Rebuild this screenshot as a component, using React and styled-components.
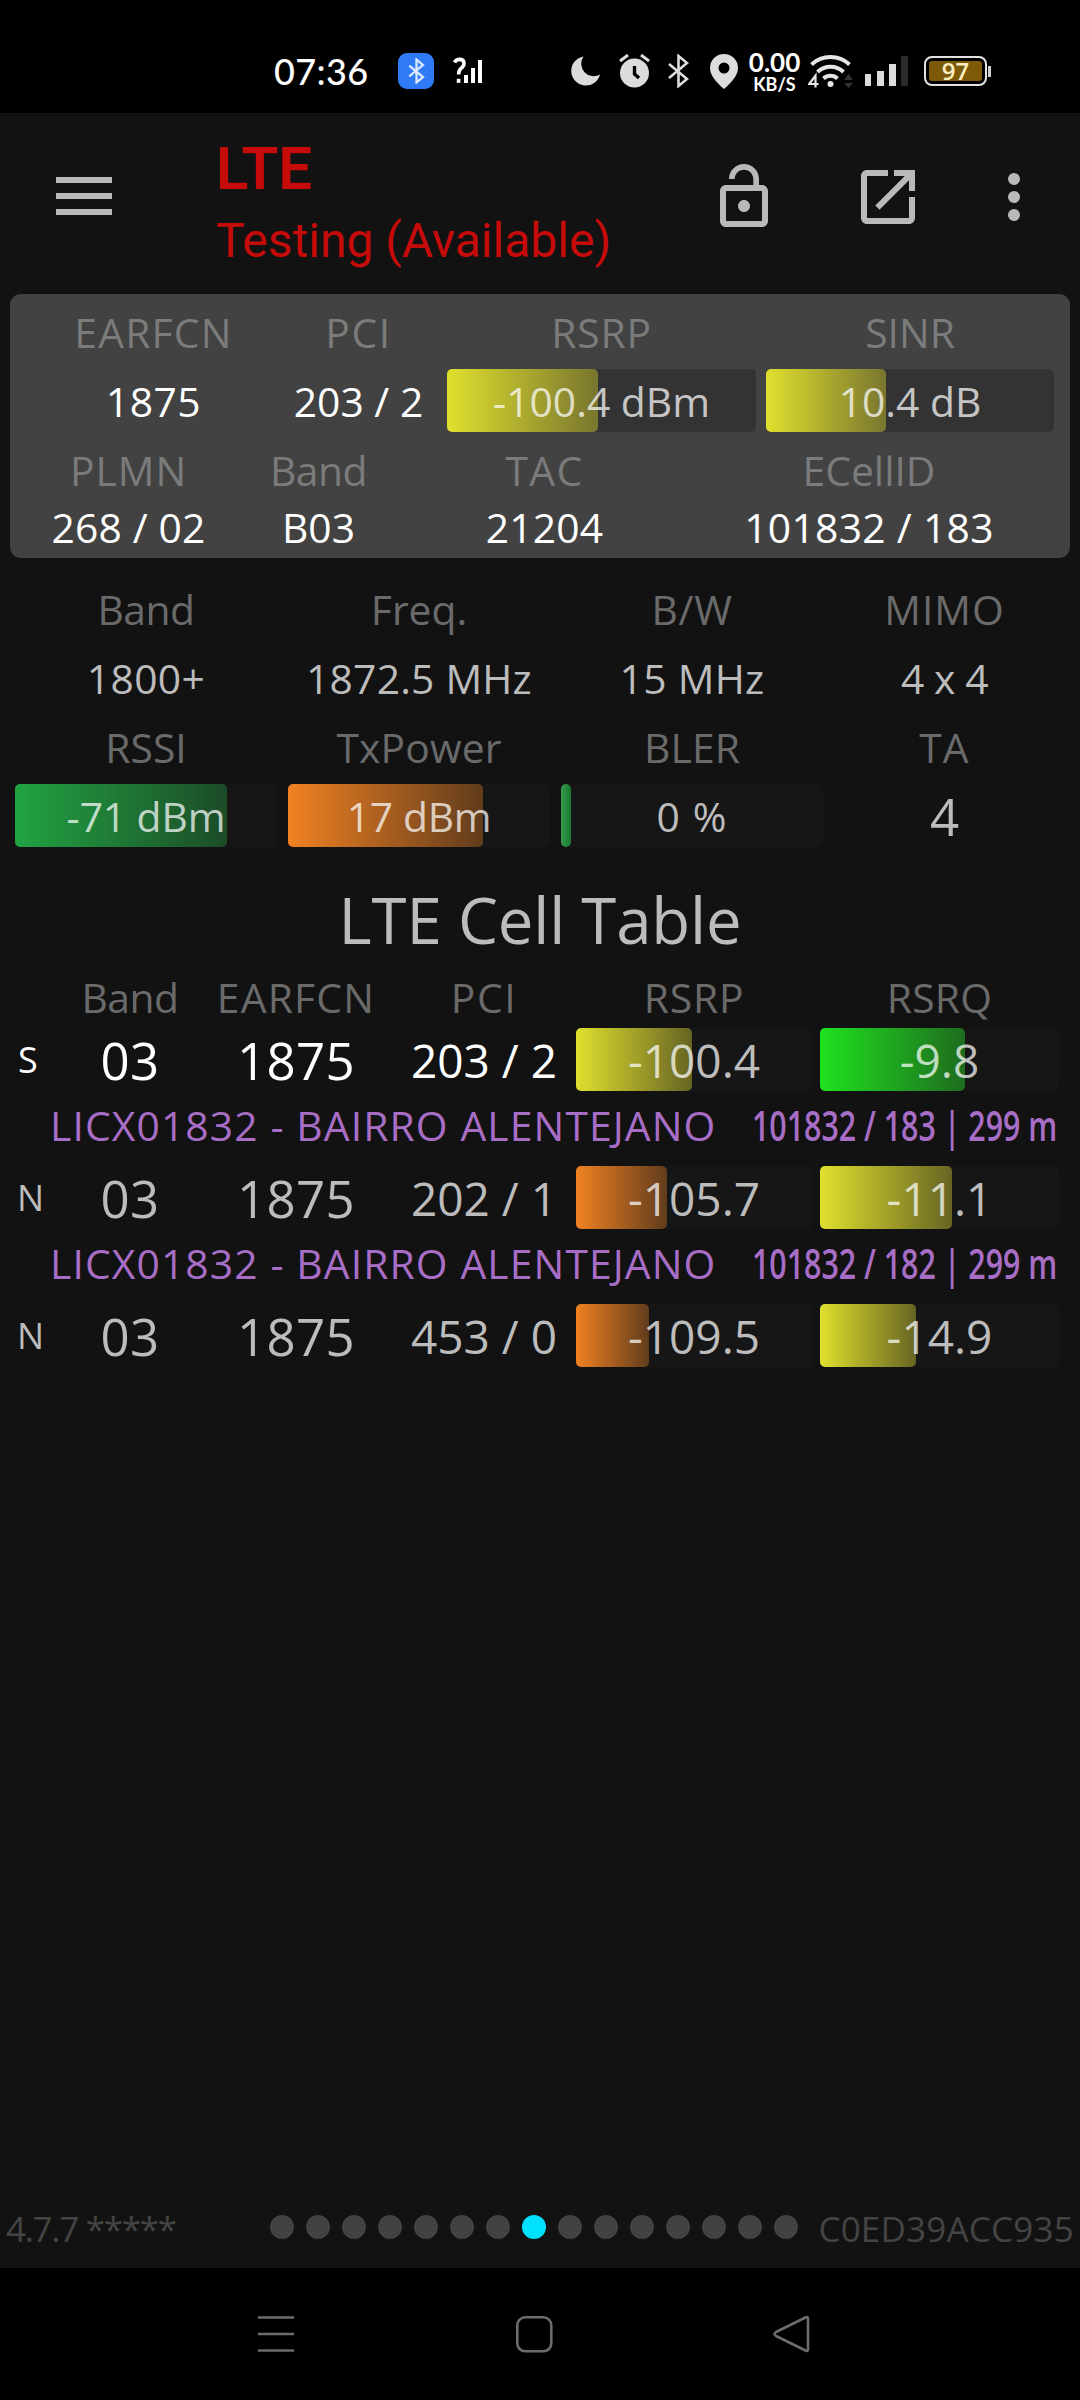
import React from 'react';
import styled, { createGlobalStyle } from 'styled-components';

const GlobalStyle = createGlobalStyle`
  * { box-sizing: border-box; }
  body { margin: 0; background: #000; }
`;

const Screen = styled.div`
  width: 1080px;
  height: 2400px;
  display: flex;
  flex-direction: column;
  overflow: hidden;
  background: #121212;
  font-family: 'Open Sans', 'Noto Sans', sans-serif;
  font-size: 40.8px;
  color: #bcbcbc;
`;

/* ---------- status bar ---------- */
const StatusBar = styled.header`
  flex: none;
  height: 113px;
  padding: 29px 0 0 274px;
  display: flex;
  align-items: center;
  background: #000;
  color: #fff;
`;
const Clock = styled.time`
  width: 94px;
  font: 500 36px/44px Lato, sans-serif;
  letter-spacing: 0.4px;
  white-space: nowrap;
`;
const Slot = styled.div`
  flex: none;
  display: flex;
  width: ${(p) => p.$w}px;
  margin-left: ${(p) => p.$gap}px;
`;
const BtBadge = styled(Slot)`
  height: 36px;
  align-items: center;
  justify-content: center;
  border-radius: 9px;
  background: #2f7bf6;
`;
const Rate = styled(Slot)`
  flex-direction: column;
  align-items: center;
  padding-top: 1px;
  font-family: Lato, sans-serif;
  font-weight: 700;
  white-space: nowrap;
`;
const RateValue = styled.span`
  font-size: 26px;
  line-height: 24px;
`;
const RateUnit = styled.span`
  font-size: 18px;
  line-height: 20px;
`;
const Battery = styled(Slot)`
  align-items: center;
`;
const BatteryShell = styled.div`
  width: 63px;
  height: 30px;
  padding: 3px;
  border: 2px solid #e2e2e2;
  border-radius: 8px;
`;
const BatteryFill = styled.div`
  width: 53px;
  height: 20px;
  border-radius: 3px;
  background: #7c5a08;
  color: #fdeec0;
  font: 600 24px/19px 'Open Sans', sans-serif;
  text-align: center;
`;
const BatteryTip = styled.div`
  width: 3px;
  height: 11px;
  margin-left: 1px;
  background: #d0d0d0;
`;

/* ---------- app bar ---------- */
const AppBar = styled.div`
  flex: none;
  height: 181px;
  display: flex;
  align-items: flex-start;
  padding-left: 56px;
`;
const Burger = styled.div`
  width: 56px;
  margin-top: 64px;
  display: flex;
  flex-direction: column;
  gap: 10px;
`;
const BurgerLine = styled.span`
  height: 6px;
  background: #b9b9b9;
`;
const Titles = styled.div`
  width: 491px;
  margin: 21px 0 0 104px;
  font-family: Roboto, sans-serif;
  color: #c60b0b;
  white-space: nowrap;
`;
const Tech = styled.h1`
  margin: 0;
  font-size: 60px;
  font-weight: 600;
  line-height: 70px;
`;
const Operator = styled.p`
  margin: 8px 0 0;
  font-size: 48px;
  line-height: 58px;
`;
const AppIcon = styled.svg`
  width: 72px;
  height: 72px;
  margin: 48px 0 0 ${(p) => p.$gap}px;
  fill: #b9b9b9;
`;

/* ---------- shared cells ---------- */
const Cell = styled.span`
  display: block;
  text-align: center;
  white-space: nowrap;
  line-height: inherit;
  font-size: ${(p) => p.$size || 40.8}px;
  letter-spacing: ${(p) => p.$ls || 0}px;
`;
const Label = styled(Cell)`
  color: ${(p) => (p.$onPanel ? '#7b7b7b' : '#6a6a6a')};
`;
const Track = styled.div`
  display: grid;
  height: 63px;
  line-height: 63px;
  border-radius: 5px;
  background: ${(p) => (p.$onPanel ? '#333' : '#161616')};
  > * { grid-area: 1 / 1; }
`;
const tones = {
  yellow: ['#dfe02e', '#676423'],
  panelYellow: ['#dfe02e', '#79762f'],
  orange: ['#f08122', '#613c1c'],
  green: ['#21a342', '#1c4c28'],
  lime: ['#20e21f', '#1e6c1f'],
  sliver: ['#38994a', '#167a2e'],
};
const Fill = styled.div`
  height: 63px;
  border-radius: 5px;
  background: linear-gradient(90deg, ${(p) => tones[p.$tone][0]}, ${(p) => tones[p.$tone][1]});
`;
const BarText = styled(Cell)`
  padding-top: 1px;
  color: rgba(255, 255, 255, 0.72);
`;

function Meter({ fill, tone, text, size, ls, onPanel }) {
  return (
    <Track $onPanel={onPanel}>
      <Fill $tone={tone} style={{ width: fill }} />
      <BarText $size={size} $ls={ls}>{text}</BarText>
    </Track>
  );
}

const Row = styled.div`
  display: grid;
  grid-template-columns: ${(p) => p.$cols};
  grid-template-rows: 100%;
  column-gap: ${(p) => p.$gap || 0}px;
  height: ${(p) => p.$h}px;
  line-height: ${(p) => p.$h}px;
  align-items: center;
`;

/* ---------- serving cell panel ---------- */
const Panel = styled.section`
  flex: none;
  width: 1060px;
  height: 264px;
  margin-left: 10px;
  padding: 7px 0 0 10px;
  border-radius: 11px;
  background: #424242;
  color: #fff;
`;
const panelTop = '267px 143px 17px 309px 10px 288px';
const panelBottom = '217px 163px 289px 360px';

/* ---------- details ---------- */
const Details = styled.section`
  flex: none;
  padding: 16px 0 0 15px;
`;
const detailCols = '262px 262px 262px 221px';

/* ---------- table ---------- */
const TableTitle = styled.h2`
  flex: none;
  margin: 24px 0 0;
  font-size: 63.5px;
  font-weight: 400;
  line-height: 92px;
  letter-spacing: -0.15px;
  text-align: center;
`;
const Table = styled.section`
  flex: 1;
  padding-left: 10px;
`;
const tableCols = '50px 140px 192px 184px 236px 8px 239px';
const HeadRow = styled(Row)`
  margin-bottom: -1px;
`;
const CellRow = styled(Row)`
  color: ${(p) => (p.$serving ? '#fff' : '#bcbcbc')};
`;
const RowCell = styled(Cell)`
  padding-top: 2px;
`;
const Kind = styled(Cell)`
  text-align: left;
  padding-left: ${(p) => p.$pad}px;
`;
const Site = styled.div`
  display: flex;
  height: 75px;
  padding: 0 0 6px 40px;
  line-height: 69px;
  color: #a86ec6;
  white-space: nowrap;
`;
const SiteName = styled.span`
  width: 702px;
  letter-spacing: 1.12px;
`;
const SiteMeta = styled.span`
  width: 305px;
  font-weight: 600;
  transform: scaleX(0.744);
  transform-origin: left center;
`;

/* ---------- footer ---------- */
const Footer = styled.footer`
  flex: none;
  height: 60px;
  padding: 1px 6px 20px 6px;
  display: flex;
  align-items: center;
  font-size: 35px;
  line-height: 40px;
  color: #444;
`;
const Version = styled.span`
  width: 264px;
  letter-spacing: -1.3px;
`;
const DeviceId = styled.span`
  letter-spacing: 0.2px;
`;
const Dots = styled.div`
  display: flex;
  gap: 12px;
  margin: -3px auto 0 0;
`;
const Dot = styled.i`
  width: 24px;
  height: 24px;
  border-radius: 50%;
  background: ${(p) => (p.$on ? '#00e1ff' : '#424242')};
`;
const NavBar = styled.nav`
  flex: none;
  height: 132px;
  padding: 47px 269px 0 257px;
  display: flex;
  justify-content: space-between;
  background: #000;
`;
const NavIcon = styled.svg`
  width: 38px;
  height: 38px;
  fill: none;
  stroke: #6c6c6c;
  stroke-width: 2.6;
`;

const siteName = 'LICX01832 - BAIRRO ALENTEJANO';
const cells = [
  { kind: 'S', pci: '203 / 2', rsrp: ['-100.4', 116, 'yellow'], rsrq: ['-9.8', 145, 'lime'], meta: '101832 / 183 | 299 m' },
  { kind: 'N', pci: '202 / 1', rsrp: ['-105.7', 91, 'orange'], rsrq: ['-11.1', 132, 'yellow'], meta: '101832 / 182 | 299 m' },
  { kind: 'N', pci: '453 / 0', rsrp: ['-109.5', 73, 'orange'], rsrq: ['-14.9', 96, 'yellow'] },
];

const BT = 'M1 10 L19 25 L10.5 32 V2 L19 9 L1 24';

function StatusIcons() {
  return (
    <>
      <BtBadge $w={36} $gap={30}>
        <svg width="17" height="26" viewBox="0 0 21 34" fill="none" stroke="#d9e8ff" strokeWidth="3">
          <path d={BT} />
        </svg>
      </BtBadge>
      <Slot $w={29} $gap={19}>
        <svg width="29" height="28" viewBox="0 0 29 28" fill="none" stroke="#fff" strokeWidth="3.6">
          <path d="M1.5 5.5 Q3 2.4 6.6 2.4 Q11 2.4 11 6.4 Q11 9 8 11.4 Q5.6 13.4 5.6 17.5" />
          <path d="M3.8 23.8 H7.4" strokeWidth="4" />
          <path d="M13 18 V26 M20 11 V26 M27 3 V26" strokeWidth="4" />
        </svg>
      </Slot>
      <Slot $w={29} $gap={89}>
        <svg width="29" height="30" viewBox="0 0 29 30" fill="#dcdcdc">
          <path d="M12.5 0.5 A14.6 14.6 0 1 0 29 18.5 A12.5 12.5 0 0 1 12.5 0.5Z" />
        </svg>
      </Slot>
      <Slot $w={31} $gap={19}>
        <svg width="31" height="34" viewBox="0 0 31 34" fill="none">
          <circle cx="15.5" cy="19" r="14.5" fill="#dcdcdc" />
          <path d="M1 7 L9 1 M30 7 L22 1" stroke="#dcdcdc" strokeWidth="3" />
          <path d="M15.5 12 V20 L20 24" stroke="#000" strokeWidth="3.4" />
        </svg>
      </Slot>
      <Slot $w={21} $gap={18}>
        <svg width="21" height="34" viewBox="0 0 21 34" fill="none" stroke="#dcdcdc" strokeWidth="2.6">
          <path d={BT} />
        </svg>
      </Slot>
      <Slot $w={28} $gap={21}>
        <svg width="28" height="35" viewBox="0 0 28 35" fill="#dcdcdc" fillRule="evenodd">
          <path d="M14 0 A14 14 0 0 0 0 14 C0 21 6 28 14 35 C22 28 28 21 28 14 A14 14 0 0 0 14 0Z M14 8.5 A5.5 5.5 0 1 1 14 19.5 A5.5 5.5 0 1 1 14 8.5Z" />
        </svg>
      </Slot>
      <Rate $w={51} $gap={11}>
        <RateValue>0.00</RateValue>
        <RateUnit>KB/S</RateUnit>
      </Rate>
      <Slot $w={46} $gap={8}>
        <svg width="46" height="34" viewBox="0 0 46 34" fill="none" stroke="#e6e6e6" strokeWidth="4">
          <path d="M3.5 10.5 A28 28 0 0 1 41.5 10.5" />
          <path d="M9.5 18 A19 19 0 0 1 35.5 18" />
          <path d="M15.5 24.5 A10.5 10.5 0 0 1 29.5 24.5" />
          <circle cx="22.5" cy="30" r="3" fill="#e6e6e6" stroke="none" />
          <path d="M36 26 L40.5 20 L45 26Z M36 29 L40.5 34 L45 29Z" fill="#333" stroke="none" />
          <path d="M7.5 33.5 V21.5 L1.2 30 H10.5" strokeWidth="2.2" />
        </svg>
      </Slot>
      <Slot $w={43} $gap={11}>
        <svg width="43" height="30" viewBox="0 0 43 30" fill="#dcdcdc">
          <rect x="0" y="18" width="6" height="12" />
          <rect x="12" y="15" width="7" height="15" />
          <rect x="24" y="8" width="7" height="22" />
          <rect x="36" y="0" width="7" height="30" fill="#2b2b2b" />
        </svg>
      </Slot>
      <Battery $w={67} $gap={16}>
        <BatteryShell>
          <BatteryFill>97</BatteryFill>
        </BatteryShell>
        <BatteryTip />
      </Battery>
    </>
  );
}

export default function App() {
  return (
    <>
      <GlobalStyle />
      <Screen>
        <StatusBar>
          <Clock>07:36</Clock>
          <StatusIcons />
        </StatusBar>

        <AppBar>
          <Burger>
            <BurgerLine />
            <BurgerLine />
            <BurgerLine />
          </Burger>
          <Titles>
            <Tech>LTE</Tech>
            <Operator>Testing (Available)</Operator>
          </Titles>
          <AppIcon viewBox="0 0 24 24" $gap={1}>
            <path d="M12 17c1.1 0 2-.9 2-2s-.9-2-2-2-2 .9-2 2 .9 2 2 2zm6-9h-1V6c0-2.76-2.24-5-5-5S7 3.24 7 6h1.9c0-1.71 1.39-3.1 3.1-3.1 1.71 0 3.1 1.39 3.1 3.1v2H6c-1.1 0-2 .9-2 2v10c0 1.1.9 2 2 2h12c1.1 0 2-.9 2-2V10c0-1.1-.9-2-2-2zm0 12H6V10h12v10z" />
          </AppIcon>
          <AppIcon viewBox="0 0 24 24" $gap={72}>
            <path d="M19 19H5V5h7V3H5c-1.11 0-2 .9-2 2v14c0 1.1.89 2 2 2h14c1.1 0 2-.9 2-2v-7h-2v7zM14 3v2h3.59l-9.83 9.83 1.41 1.41L19 6.41V10h2V3h-7z" />
          </AppIcon>
          <AppIcon viewBox="0 0 24 24" $gap={54}>
            <circle cx="12" cy="6" r="2" />
            <circle cx="12" cy="12" r="2" />
            <circle cx="12" cy="18" r="2" />
          </AppIcon>
        </AppBar>

        <Panel>
          <Row $cols={panelTop} $h={62}>
            <Label $onPanel $ls={1.2}>EARFCN</Label>
            <Label $onPanel $ls={1.6}>PCI</Label>
            <i />
            <Label $onPanel $ls={0.85}>RSRP</Label>
            <i />
            <Label $onPanel>SINR</Label>
          </Row>
          <Row $cols={panelTop} $h={75}>
            <RowCell $ls={0.5}>1875</RowCell>
            <RowCell>203 / 2</RowCell>
            <i />
            <Meter onPanel fill={151} tone="panelYellow" text="-100.4 dBm" />
            <i />
            <Meter onPanel fill={120} tone="panelYellow" text="10.4 dB" />
          </Row>
          <Row $cols={panelBottom} $h={64}>
            <Label $onPanel $ls={1}>PLMN</Label>
            <Label $onPanel $ls={-0.5}>Band</Label>
            <Label $onPanel $ls={1.4}>TAC</Label>
            <Label $onPanel>ECellID</Label>
          </Row>
          <Row $cols={panelBottom} $h={51}>
            <Cell $ls={0.15}>268 / 02</Cell>
            <Cell>B03</Cell>
            <Cell $ls={0.15}>21204</Cell>
            <Cell $ls={0.3}>101832 / 183</Cell>
          </Row>
        </Panel>

        <Details>
          <Row $cols={detailCols} $gap={11} $h={70}>
            <Label $ls={-0.5}>Band</Label>
            <Label>Freq.</Label>
            <Label $ls={0.65}>B/W</Label>
            <Label $ls={1}>MIMO</Label>
          </Row>
          <Row $cols={detailCols} $gap={11} $h={69}>
            <Cell $ls={0.4}>1800+</Cell>
            <Cell $ls={0.2}>1872.5 MHz</Cell>
            <Cell $ls={0.3}>15 MHz</Cell>
            <Cell $ls={-0.4}>4 x 4</Cell>
          </Row>
          <Row $cols={detailCols} $gap={11} $h={68}>
            <Label>RSSI</Label>
            <Label $ls={0.15}>TxPower</Label>
            <Label $ls={0.15}>BLER</Label>
            <Label $ls={1.1}>TA</Label>
          </Row>
          <Row $cols={detailCols} $gap={11} $h={69}>
            <Meter fill={212} tone="green" text="-71 dBm" ls={-0.1} />
            <Meter fill={195} tone="orange" text="17 dBm" ls={-0.3} />
            <Meter fill={10} tone="sliver" text="0 %" ls={1.2} />
            <RowCell $size={51}>4</RowCell>
          </Row>
        </Details>

        <TableTitle>LTE Cell Table</TableTitle>
        <Table>
          <HeadRow $cols={tableCols} $h={63}>
            <i />
            <Label $ls={-0.5}>Band</Label>
            <Label $ls={1.2}>EARFCN</Label>
            <Label $ls={1.6}>PCI</Label>
            <Label $ls={0.85}>RSRP</Label>
            <i />
            <Label $ls={0.3}>RSRQ</Label>
          </HeadRow>
          {cells.map((c, i) => (
            <React.Fragment key={i}>
              <CellRow $serving={i === 0} $cols={tableCols} $h={63}>
                <Kind $size={36} $pad={i === 0 ? 8 : 7}>{c.kind}</Kind>
                <RowCell $size={51} $ls={0.3}>03</RowCell>
                <RowCell $size={51} $ls={0.3}>1875</RowCell>
                <RowCell $size={46}>{c.pci}</RowCell>
                <Meter fill={c.rsrp[1]} tone={c.rsrp[2]} text={c.rsrp[0]} size={46} />
                <i />
                <Meter fill={c.rsrq[1]} tone={c.rsrq[2]} text={c.rsrq[0]} size={46} />
              </CellRow>
              {c.meta && (
                <Site>
                  <SiteName>{siteName}</SiteName>
                  <SiteMeta>{c.meta}</SiteMeta>
                </Site>
              )}
            </React.Fragment>
          ))}
        </Table>

        <Footer>
          <Version>4.7.7 *****</Version>
          <Dots>
            {Array.from({ length: 15 }, (_, i) => (
              <Dot key={i} $on={i === 7} />
            ))}
          </Dots>
          <DeviceId>C0ED39ACC935</DeviceId>
        </Footer>
        <NavBar>
          <NavIcon viewBox="0 0 38 38">
            <path d="M1 2.5 H37 M1 19 H37 M1 35.5 H37" />
          </NavIcon>
          <NavIcon viewBox="0 0 38 38">
            <rect x="2.3" y="2.3" width="34" height="34" rx="8" />
          </NavIcon>
          <NavIcon viewBox="0 0 38 38">
            <path d="M32.5 2.5 Q35 1 35 4 V34 Q35 37 32.5 35.5 L3 21 Q0 19 3 17Z" strokeLinejoin="round" />
          </NavIcon>
        </NavBar>
      </Screen>
    </>
  );
}
